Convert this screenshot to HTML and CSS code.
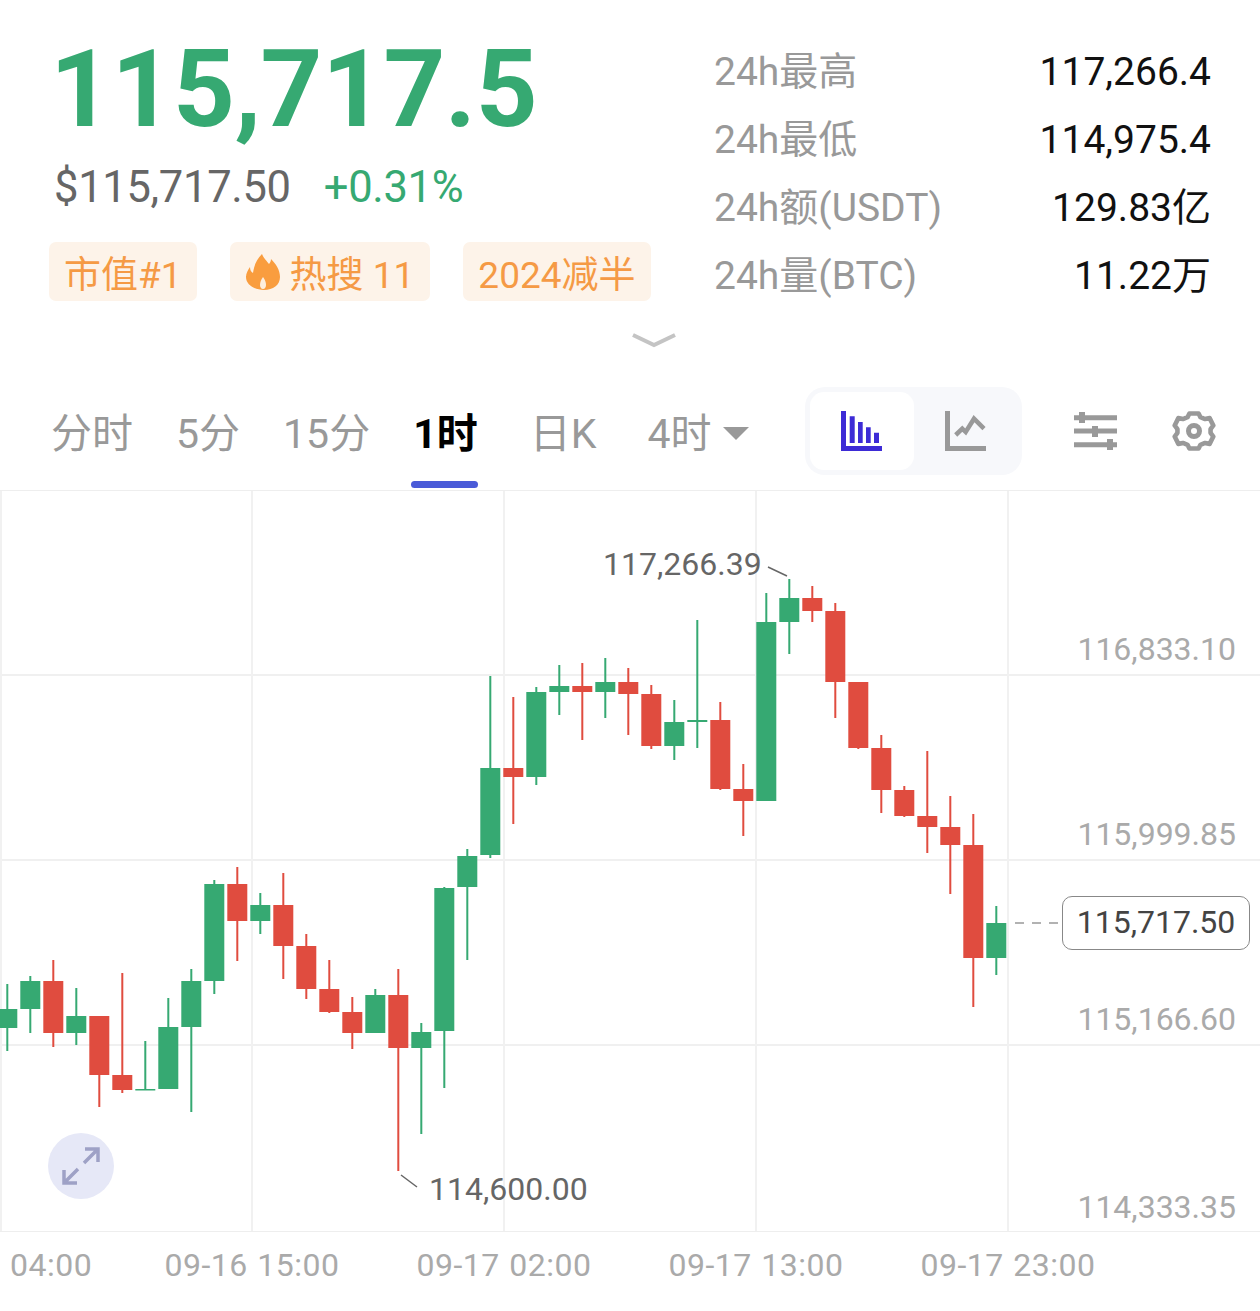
FILE: index.html
```html
<!DOCTYPE html>
<html lang="en">
<head>
    <meta charset="UTF-8">
    <meta name="viewport" content="width=device-width, initial-scale=1.0">
    <title>BTC 1h</title>
    <link rel="stylesheet" href="styles.css">
</head>
<body>
    <!-- Price header -->
    <div class="header">
        <div class="price-col">
            <div class="price">115,717.5</div>
            <div class="sub-row">
                <span class="usd">$115,717.50</span>
                <span class="change">+0.31%</span>
            </div>
            <div class="tags">
                <span class="tag">市值#1</span>
                <span class="tag tag-hot">
                    <svg class="flame" viewBox="0 0 36 38">
                        <path d="M17 1c2 5 5 7 7 10 1-1 2-3 2-5 5 5 9 11 9 18 0 8-7 13-16 13S1 32 1 24c0-4 2-7 4-10 0 3 1 5 3 6 1-8 4-14 9-19z" fill="#f99d3f"/>
                        <path d="M18 24c2 3 3 5 3 8 0 2-1 4-3 4s-3-2-3-4c0-3 1-5 3-8z" fill="#fdeedd"/>
                    </svg>
                    热搜 11
                </span>
                <span class="tag">2024减半</span>
            </div>
        </div>
        <div class="stats">
            <div class="stat"><span class="stat-label">24h最高</span><span class="stat-value">117,266.4</span></div>
            <div class="stat"><span class="stat-label">24h最低</span><span class="stat-value">114,975.4</span></div>
            <div class="stat"><span class="stat-label">24h额(USDT)</span><span class="stat-value">129.83亿</span></div>
            <div class="stat"><span class="stat-label">24h量(BTC)</span><span class="stat-value">11.22万</span></div>
        </div>
    </div>

    <div class="more-row">
        <svg class="chevron" viewBox="0 0 46 16"><path d="M2 3l21 10L44 3" fill="none" stroke="#c4c4c4" stroke-width="4"/></svg>
    </div>

    <!-- Period tabs and tools -->
    <div class="toolbar">
        <div class="tabs">
            <span class="tab">分时</span>
            <span class="tab">5分</span>
            <span class="tab">15分</span>
            <span class="tab active">1时</span>
            <span class="tab tab-day">日K</span>
            <span class="tab tab-more">4时<i class="caret"></i></span>
        </div>
        <div class="toggle">
            <div class="toggle-item on">
                <svg class="icon" viewBox="0 0 41 40">
                    <path d="M0 0h5v35h36v5H0z M8.7 5.3h5V32h-5z M17 11h4.7v21H17z M25 16.3h4.7V32H25z M33 21.7h5V32h-5z" fill="#3d2bd6"/>
                </svg>
            </div>
            <div class="toggle-item">
                <svg class="icon" viewBox="0 0 41 40">
                    <path d="M0 0h5v35h36v5H0z" fill="#999"/>
                    <path d="M10.7 24l6.6-6.3 3.4 3.3L29 7.7l10 10" fill="none" stroke="#999" stroke-width="4.5"/>
                </svg>
            </div>
        </div>
        <svg class="tool-sliders" viewBox="0 0 43 38">
            <path d="M0 5.7h43M0 19h43M0 32.7h43" stroke="#999" stroke-width="5"/>
            <path d="M5 0h6v11H5zM18 14h6v11h-6zM33 27h6v11h-6z" fill="#999"/>
        </svg>
        <svg class="tool-gear" viewBox="0 0 44 44">
            <path d="M17 3h10l2 4 5 2 5-1 4 8-3 4v4l3 4-4 8-5-1-5 2-2 4H17l-2-4-5-2-5 1-4-8 3-4v-4l-3-4 4-8 5 1 5-2z" fill="none" stroke="#999" stroke-width="5" stroke-linejoin="round" transform="translate(22 22) scale(.92) translate(-22 -22)"/>
            <circle cx="22" cy="22" r="5.5" fill="none" stroke="#999" stroke-width="5"/>
        </svg>
    </div>

    <!-- Candles -->
    <div class="chart">
        <svg id="candles" class="candles" viewBox="0 491 1260 740"></svg>

        <span class="axis-label axis-a">116,833.10</span>
        <span class="axis-label axis-b">115,999.85</span>
        <span class="axis-label axis-c">115,166.60</span>
        <span class="axis-label axis-d">114,333.35</span>

        <span class="mark mark-high">117,266.39</span>
        <span class="mark mark-low">114,600.00</span>

        <div class="last-price">115,717.50</div>

        <div class="expand">
            <svg viewBox="0 0 38 38" class="expand-icon">
                <path d="M23 2h13v13M36 2L22 16M2 23v13h13M2 36l14-14" fill="none" stroke="#9ea1c6" stroke-width="3.5"/>
            </svg>
        </div>
    </div>

    <div class="times">
        <span class="time first">04:00</span>
        <span class="time">09-16 15:00</span>
        <span class="time">09-17 02:00</span>
        <span class="time">09-17 13:00</span>
        <span class="time">09-17 23:00</span>
    </div>

    <script src="chart.js"></script>
</body>
</html>
```

FILE: styles.css
```css
body {
    margin: 0;
    background: #fff;
    font-family: Roboto, "Noto Sans CJK SC", sans-serif;
}
.header {
    display: flex;
    height: 325px;
}
.price-col {
    width: 714px;
    padding-left: 49px;
    box-sizing: border-box;
}
.price {
    font-size: 108px;
    font-weight: 700;
    line-height: 126px;
    margin-top: 26px;
    margin-left: 1px;
    color: #36a972;
    letter-spacing: -0.5px;
}
.sub-row {
    display: flex;
    gap: 33px;
    margin-top: 10px;
    margin-left: 5px;
    font-size: 43.5px;
    line-height: 52px;
    letter-spacing: -0.3px;
}
.usd {
    color: #666;
}
.change {
    color: #36a972;
}
.tags {
    display: flex;
    gap: 33px;
    margin-top: 28px;
}
.tag {
    display: flex;
    align-items: center;
    gap: 9px;
    height: 59px;
    padding: 0 15px;
    background: #fdf3e9;
    border-radius: 7px;
    color: #f59a45;
    font-size: 37px;
}
.tag-hot {
    padding: 0 16px 0 15px;
}
.flame {
    width: 36px;
    height: 38px;
}
.stats {
    width: 497px;
    padding-top: 38px;
}
.stat {
    display: flex;
    justify-content: space-between;
    height: 68px;
    font-size: 39px;
    line-height: 68px;
}
.stat-label {
    color: #999;
}
.stat-value {
    color: #111;
}
.more-row {
    display: flex;
    padding-left: 631px;
    height: 60px;
}
.chevron {
    width: 46px;
    height: 16px;
    margin-top: 7px;
}
.toolbar {
    display: flex;
    align-items: center;
    height: 105px;
    border-bottom: 1px solid #eee;
}
.tabs {
    display: flex;
    gap: 43px;
    padding-left: 51px;
    width: 805px;
    box-sizing: border-box;
    margin-bottom: 8px;
}
.tab {
    position: relative;
    display: flex;
    align-items: center;
    color: #999;
    font-size: 41px;
    line-height: 96px;
}
.tab.active {
    color: #000;
    font-weight: 700;
}
.tab.active::after {
    content: "";
    position: absolute;
    left: -2px;
    right: 0;
    bottom: -6px;
    height: 7px;
    border-radius: 4px;
    background: #4a5bd8;
}
.tab-day {
    margin-left: 9px;
}
.tab-more {
    margin-left: 8px;
}
.caret {
    margin-left: 12px;
    border-left: 13px solid transparent;
    border-right: 13px solid transparent;
    border-top: 13px solid #999;
}
.toggle {
    display: flex;
    width: 217px;
    height: 88px;
    padding: 5px;
    box-sizing: border-box;
    background: #f7f8fb;
    border-radius: 20px;
    margin-bottom: 13px;
}
.toggle-item {
    display: flex;
    align-items: center;
    justify-content: center;
    flex: 1;
    border-radius: 14px;
}
.toggle-item.on {
    background: #fff;
}
.icon {
    width: 41px;
    height: 40px;
}
.tool-sliders {
    width: 43px;
    height: 38px;
    margin-left: 52px;
    margin-bottom: 13px;
}
.tool-gear {
    width: 44px;
    height: 44px;
    margin-left: 55px;
    margin-bottom: 13px;
}
.chart {
    position: relative;
    height: 740px;
    border-bottom: 1px solid #eee;
}
.candles {
    display: block;
    width: 1260px;
    height: 740px;
}
.axis-label {
    position: absolute;
    right: 24px;
    color: #aaa;
    font-size: 32px;
    line-height: 38px;
}
.axis-a {
    top: 139px;
}
.axis-b {
    top: 324px;
}
.axis-c {
    top: 509px;
}
.axis-d {
    top: 697px;
}
.mark {
    position: absolute;
    color: #666;
    font-size: 32px;
    line-height: 38px;
}
.mark-high {
    left: 603px;
    top: 54px;
}
.mark-low {
    left: 429px;
    top: 679px;
}
.last-price {
    position: absolute;
    left: 1062px;
    top: 405px;
    width: 188px;
    height: 54px;
    box-sizing: border-box;
    border: 1.5px solid #888;
    border-radius: 10px;
    background: #fff;
    color: #444;
    font-size: 32px;
    line-height: 51px;
    text-align: center;
}
.expand {
    position: absolute;
    left: 48px;
    top: 642px;
    width: 66px;
    height: 66px;
    display: flex;
    align-items: center;
    justify-content: center;
    border-radius: 50%;
    background: #e6e8f7;
}
.expand-icon {
    width: 38px;
    height: 38px;
}
.times {
    display: grid;
    grid-template-columns: 126px repeat(4, 252px);
    margin-top: 14px;
    color: #aaa;
    font-size: 32px;
    line-height: 38px;
    letter-spacing: 0.5px;
    word-spacing: 1px;
}
.time {
    text-align: center;
}
.time.first {
    text-align: left;
    padding-left: 10px;
}
```

FILE: chart.js
```js
// colour, body top, body bottom, wick top, wick bottom
// numbers are y values on the page, same as the svg viewBox
const data = [
    ['g', 1009, 1028, 984, 1051], ['g', 981, 1009, 976, 1033], ['r', 981, 1033, 960, 1047],
    ['g', 1016, 1033, 988, 1045], ['r', 1016, 1075, 1016, 1107], ['r', 1075, 1090, 973, 1093],
    ['g', 1089, 1090.5, 1041, 1090], ['g', 1027, 1089, 998, 1089], ['g', 981, 1027, 969, 1112],
    ['g', 884, 981, 880, 994], ['r', 884, 921, 867, 961], ['g', 905, 921, 893, 934],
    ['r', 905, 946, 873, 979], ['r', 946, 989, 934, 999], ['r', 989, 1012, 960, 1013],
    ['r', 1012, 1033, 997, 1049], ['g', 995, 1033, 989, 1033], ['r', 995, 1048, 969, 1171],
    ['g', 1032, 1048, 1023, 1134], ['g', 888, 1031, 887, 1088], ['g', 856, 887, 849, 960],
    ['g', 768, 855, 676, 858], ['r', 768, 777, 697, 824], ['g', 692, 777, 687, 785],
    ['g', 686, 692, 665, 715], ['r', 686, 692, 663, 740], ['g', 682, 692, 658, 718],
    ['r', 682, 694, 668, 735], ['r', 694, 746, 685, 749], ['g', 722, 746, 700, 760],
    ['g', 720, 722, 620, 748], ['r', 720, 789, 702, 790], ['r', 789, 801, 764, 836],
    ['g', 622, 801, 593, 801], ['g', 598, 622, 579, 654], ['r', 598, 611, 586, 622],
    ['r', 611, 682, 603, 718], ['r', 682, 748, 682, 749], ['r', 748, 790, 735, 813],
    ['r', 790, 816, 786, 817], ['r', 816, 827, 751, 853], ['r', 827, 845, 796, 894],
    ['r', 845, 958, 814, 1007], ['g', 923, 958, 906, 975]
];

const colors = { g: '#36a972', r: '#e04c3f' };
let svg = '';

// grid
[675, 860, 1045].forEach(function (y) {
    svg += `<rect x="0" y="${y - 1}" width="1260" height="2" fill="#f0f0f0"/>`;
});
[0, 251, 503, 755, 1007].forEach(function (x) {
    svg += `<rect x="${x}" y="491" width="2" height="740" fill="#f1f1f1"/>`;
});

data.forEach(function (c, i) {
    const x = 7.3 + 23 * i;
    svg += `<rect x="${x - 1}" y="${c[3]}" width="2" height="${c[4] - c[3]}" fill="${colors[c[0]]}"/>`;
    svg += `<rect x="${x - 10}" y="${c[1]}" width="20" height="${c[2] - c[1]}" fill="${colors[c[0]]}"/>`;
});

// leader lines for high, low and last price
svg += '<path d="M768 567l19 9M401 1175l16 12" stroke="#666" stroke-width="1.5" fill="none"/>';
svg += '<path d="M1015 923h47" stroke="#999" stroke-width="1.5" stroke-dasharray="9 8" fill="none"/>';

document.getElementById('candles').innerHTML = svg;
```
